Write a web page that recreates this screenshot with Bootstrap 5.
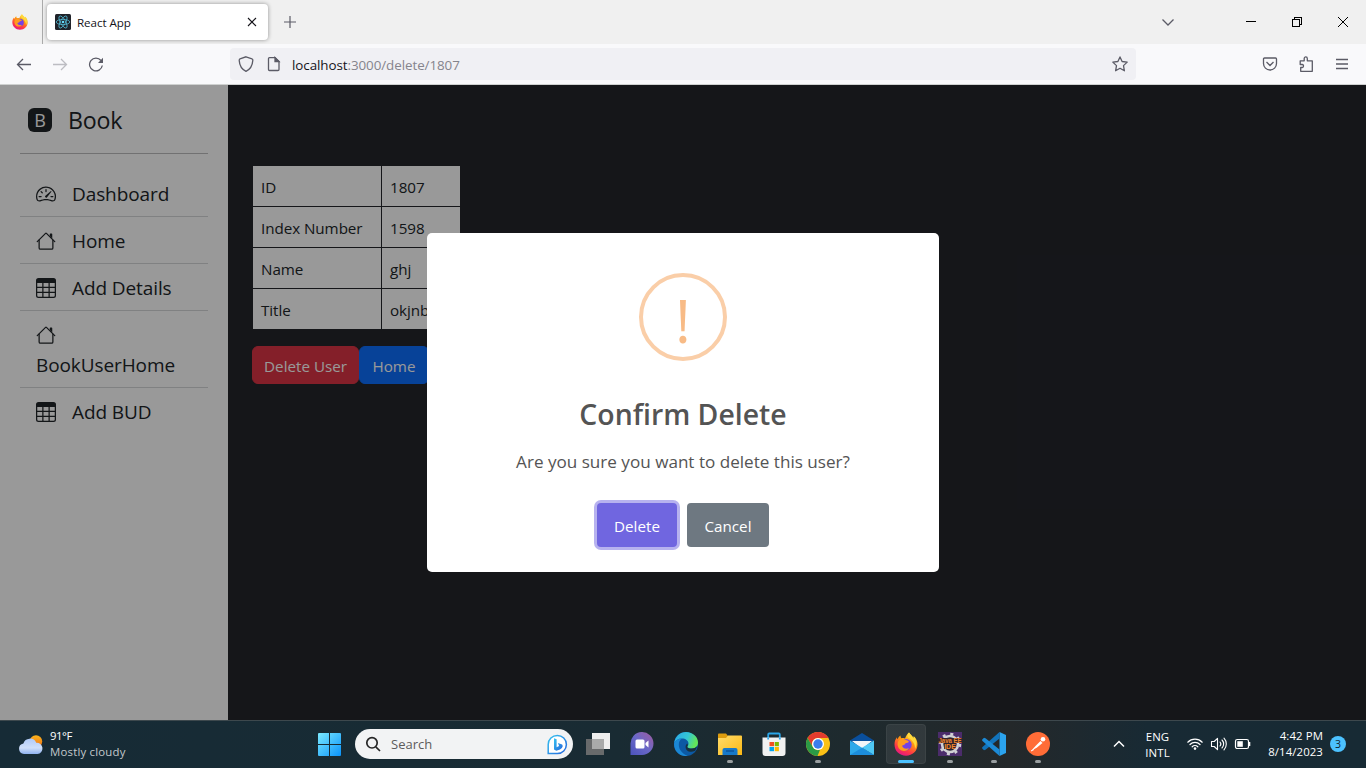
<!DOCTYPE html>
<html lang="en">
<head>
<meta charset="utf-8">
<meta name="viewport" content="width=device-width, initial-scale=1">
<title>React App</title>
<link href="https://cdn.jsdelivr.net/npm/bootstrap@5.3.0/dist/css/bootstrap.min.css" rel="stylesheet">
<style>
  html, body { height: 100%; overflow: hidden; }
  body { font-family: "Open Sans", "Noto Sans", sans-serif; font-size: 15.2px; line-height: 24px; }
  svg { display: block; flex: none; }

  /* browser chrome */
  .tabstrip { height: 44px; background: #f0f0f0; }
  .fx-view { width: 43px; border-right: 1px solid #aaa; padding-left: 12px; }
  .browser-tab { width: 221px; height: 36px; margin-left: 4px; padding: 0 10px 0 8px; background: #fff; border-radius: 4px; box-shadow: 0 0 4px rgba(0,0,0,.4); font-size: 11.6px; color: #15141a; letter-spacing: -.05px; }
  .tab-label { margin-left: 6px; padding-top: 2px; }
  .win-ctl { width: 46px; }
  .toolbar { height: 41px; background: #f9f9fb; border-bottom: 1px solid #cfd1d0; color: #5b5b66; }
  .urlbar { width: 906px; height: 32px; margin-left: 126px; padding: 0 8px; background: #f0f0f4; border-radius: 4px; font-size: 13.4px; letter-spacing: -.07px; color: #85848c; }
  .urlbar b { font-weight: 400; color: #15141a; }
  .url-text { margin-left: 10px; padding-top: 2px; }

  /* application */
  .viewport-area { background: #23252b; min-height: 0; }
  .side { width: 228px; background: #fff; padding: 14px 20px 0; color: #212529; }
  .brand-row { height: 42px; padding-left: 8px; font-size: 23.200px; line-height: 36px; gap: 16px; letter-spacing: -.2px; }
  .b-mark { width: 24px; height: 24px; border-radius: 6px; background: #212529; color: #fff; font-size: 18px; line-height: 24px; text-align: center; letter-spacing: 0; }
  .side hr { margin: 12px 0 16px; border-color: #212529; opacity: .3; }
  .side .list-group-item { padding: 8px 16px; font-size: 19px; line-height: 30px; height: 47px; color: #212529; background: none; border-color: #d5d7d9; }
  .side .list-group-item.tall { height: 77px; }
  .side .list-group-item:last-child { height: 46px; }
  .side .list-group-item svg { display: inline-block; vertical-align: -4px; width: 20px; height: 20px; margin-right: 16px; }
  .side .list-group-item span { display: inline-block; line-height: 28px; padding-top: 2px; vertical-align: top; letter-spacing: -.1px; }
  .main-pane { padding: 80px 24px 0; }
  .record { width: 209px; border-color: #23252b; margin-bottom: 16px; }
  .record td { border: 1px solid #23252b; background: #fff; color: #212529; padding: 9px 8px 7px; letter-spacing: -.05px; }
  .main-pane .btn { font-size: 15.2px; line-height: 24px; height: 38px; padding: 7px 0 5px; }

  .shade { background: rgba(0,0,0,.4); }
  .confirm { width: 512px; height: 339px; background: #fff; border-radius: 5px; padding-top: 40px; color: #545454; }
  .warn-ring { width: 88px; height: 88px; border: 4px solid #facea8; border-radius: 50%; color: #f8bb86; font-size: 60px; line-height: 86px; font-weight: 400; }
  .confirm h2 { font-size: 28.400px; line-height: 36px; font-weight: 600; margin: 35px 0 0; }
  .confirm p { font-size: 17.1px; line-height: 27px; margin: 16px 0 0; }
  .confirm .btn { height: 44px; border: 0; border-radius: 4px; color: #fff; padding: 2px 0 0; font-size: 15.2px; }
  .btn-go { width: 80px; background: #7066e0 !important; box-shadow: 0 0 0 3px rgba(112,102,224,.5); }
  .btn-no { width: 82px; background: #6e7881 !important; }

  /* taskbar */
  .taskbar { height: 48px; padding-bottom: 1px; border-top: 1px solid #3d484d; background: linear-gradient(90deg, #162b36 0, #192b33 45%, #1e2a2e 62%, #24282a 74%, #182a34 84%, #172a34 100%); color: #fff; font-size: 11.4px; line-height: 16px; }
  .weather { width: 307px; padding-left: 18px; }
  .cell { width: 44px; height: 46px; }
  .cell.run::after { content: ""; position: absolute; bottom: 4px; left: 19px; width: 6px; height: 3px; border-radius: 2px; background: #9a9fa1; }
  .cell.current::before { content: ""; position: absolute; inset: 3px 2px 3px; background: rgba(255,255,255,.08); border: 1px solid rgba(255,255,255,.05); border-radius: 4px; }
  .cell.current::after { left: 14px; width: 16px; background: #4cc2ff; }
  .cell svg { position: relative; }
  .find { width: 218px; height: 30px; border-radius: 15px; background: #f2f3f4; color: #5c5c5c; font-size: 13px; margin: 0 3px 0 4px; padding: 0 5px 0 10px; }
  .tray-badge { width: 16px; height: 16px; border-radius: 50%; background: #4cc2ff; color: #10242e; font-size: 10.5px; }
</style>
</head>
<body class="d-flex flex-column">

<svg width="0" height="0" class="position-absolute">
  <defs>
    <linearGradient id="fxA" x1=".8" y1="0" x2=".3" y2="1"><stop offset="0" stop-color="#fff44f"/><stop offset=".4" stop-color="#ff980e"/><stop offset=".75" stop-color="#ff3647"/><stop offset="1" stop-color="#e31587"/></linearGradient>
    <symbol id="firefox" viewBox="0 0 24 24">
      <path fill="url(#fxA)" d="M15 .5c1 2 3 3 4.300 5.500.5-.5.5-1 .4-1.700C22 6 23.500 9 23.500 12.500 23.500 19 18.500 23.700 12 23.700S.5 19 .5 12.500C.5 9.500 1.500 7 3 5.300c0 1 .1 1.500.5 2C4.500 5.500 5 4.500 6.500 3.500c0 1.500.4 2.300 1 2.700 1.500-.4 3 0 3.500.3C12 4 13 2 15 .5z"/>
      <circle cx="12" cy="12.800" r="5.700" fill="#7542e5"/>
      <path fill="#ff9b1f" d="M5 8c2.500-1.500 5-1.200 6.500-.2 1.300 1 3.300.7 3.300 1.700S12.500 11 11.500 11.200c-.5 1.600-2 1.700-3.500 2.500 1 3 4.500 3.600 7 2.300-1.500 3-6 4-9 1.500S3 10.500 5 8z"/>
      <path fill="#ffd83b" d="M15 .5c1 2 3 3 4.300 5.500.5-.5.5-1 .4-1.700 2.800 3 3.800 8.200 1.300 12.700.3-5-2.500-9-6.500-11-1.500-1-1-3.500.5-5.500z"/>
    </symbol>
    <symbol id="bi-house" viewBox="0 0 16 16">
      <path fill-rule="evenodd" d="M2 13.500V7h1v6.500a.5.5 0 0 0 .5.5h9a.5.5 0 0 0 .5-.5V7h1v6.500a1.500 1.500 0 0 1-1.500 1.500h-9A1.500 1.500 0 0 1 2 13.500zm11-11V6l-2-2V2.500a.5.5 0 0 1 .5-.5h1a.5.5 0 0 1 .5.5z"/>
      <path fill-rule="evenodd" d="M7.293 1.500a1 1 0 0 1 1.414 0l6.647 6.646a.5.5 0 0 1-.708.708L8 2.207 1.354 8.854a.5.5 0 1 1-.708-.708L7.293 1.500z"/>
    </symbol>
    <symbol id="bi-table" viewBox="0 0 16 16">
      <path d="M0 2a2 2 0 0 1 2-2h12a2 2 0 0 1 2 2v12a2 2 0 0 1-2 2H2a2 2 0 0 1-2-2V2zm15 2h-4v3h4V4zm0 4h-4v3h4V8zm0 4h-4v3h3a1 1 0 0 0 1-1v-2zm-5 3v-3H6v3h4zm-5 0v-3H1v2a1 1 0 0 0 1 1h3zm-4-4h4V8H1v3zm0-4h4V4H1v3zm5-3v3h4V4H6zm4 4H6v3h4V8z"/>
    </symbol>
    <symbol id="bi-speed" viewBox="0 0 16 16">
      <path d="M8 4a.5.5 0 0 1 .5.5V6a.5.5 0 0 1-1 0V4.500A.5.5 0 0 1 8 4zM3.732 5.732a.5.5 0 0 1 .707 0l.915.914a.5.5 0 1 1-.708.708l-.914-.915a.5.5 0 0 1 0-.707zM2 10a.5.5 0 0 1 .5-.5h1.586a.5.5 0 0 1 0 1H2.500A.5.5 0 0 1 2 10zm9.500 0a.5.5 0 0 1 .5-.5h1.500a.5.5 0 0 1 0 1H12a.5.5 0 0 1-.5-.5zm.754-4.246a.389.389 0 0 0-.527-.02L7.547 9.310a.91.91 0 1 0 1.302 1.258l3.434-4.297a.389.389 0 0 0-.029-.518z"/>
      <path fill-rule="evenodd" d="M0 10a8 8 0 1 1 15.547 2.661c-.442 1.253-1.845 1.602-2.932 1.250C11.309 13.488 9.475 13 8 13c-1.474 0-3.310.488-4.615.911-1.087.352-2.490.003-2.932-1.250A7.988 7.988 0 0 1 0 10zm8-7a7 7 0 0 0-6.603 9.329c.203.575.923.876 1.680.630C4.397 12.533 6.358 12 8 12s3.604.532 4.923.960c.757.245 1.477-.056 1.680-.631A7 7 0 0 0 8 3z"/>
    </symbol>
    <linearGradient id="winG" x1="0" y1="0" x2="1" y2="1"><stop offset="0" stop-color="#7beaff"/><stop offset="1" stop-color="#0a93fb"/></linearGradient>
    <linearGradient id="edgeG" x1="0" y1="0" x2="1" y2=".3"><stop offset="0" stop-color="#2aa7e8"/><stop offset=".6" stop-color="#34c6d4"/><stop offset="1" stop-color="#63e65a"/></linearGradient>
    <linearGradient id="foldG" x1="0" y1="0" x2="1" y2="1"><stop offset="0" stop-color="#ffdc6b"/><stop offset="1" stop-color="#fbb814"/></linearGradient>
    <linearGradient id="chatG" x1="1" y1="0" x2="0" y2="1"><stop offset="0" stop-color="#a15b9e"/><stop offset=".5" stop-color="#6a68c8"/><stop offset="1" stop-color="#4b53bc"/></linearGradient>
    <linearGradient id="bingG" x1="0" y1="0" x2="1" y2="1"><stop offset="0" stop-color="#35c3f0"/><stop offset="1" stop-color="#2466dc"/></linearGradient>
    <linearGradient id="sunG" x1="0" y1="0" x2="0" y2="1"><stop offset="0" stop-color="#fbb41c"/><stop offset="1" stop-color="#ef6c17"/></linearGradient>
    <linearGradient id="cloudG" x1="0" y1="0" x2="0" y2="1"><stop offset="0" stop-color="#b0caf8"/><stop offset=".6" stop-color="#cfdff9"/><stop offset="1" stop-color="#8fb2f0"/></linearGradient>
  </defs>
</svg>

<!-- tab strip -->
<div class="tabstrip d-flex align-items-center flex-shrink-0">
  <div class="fx-view h-100 d-flex align-items-center"><svg width="16" height="16"><use href="#firefox"/></svg></div>
  <div class="browser-tab d-flex align-items-center">
    <svg width="16" height="16" viewBox="0 0 16 16"><rect width="16" height="16" rx="1.500" fill="#20232a"/><g fill="none" stroke="#53b9d3" stroke-width=".8"><ellipse cx="8" cy="8" rx="6.800" ry="2.600"/><ellipse cx="8" cy="8" rx="6.800" ry="2.600" transform="rotate(60 8 8)"/><ellipse cx="8" cy="8" rx="6.800" ry="2.600" transform="rotate(120 8 8)"/></g><circle cx="8" cy="8" r="1.300" fill="#61dafb"/></svg>
    <span class="tab-label me-auto">React App</span>
    <svg width="12" height="12" viewBox="0 0 12 12" fill="none" stroke="#15141a" stroke-width="1.100"><path d="M2 2l8 8M10 2l-8 8"/></svg>
  </div>
  <svg class="ms-3" width="12" height="12" viewBox="0 0 12 12" fill="none" stroke="#5b5b66" stroke-width="1.200"><path d="M6 0v12M0 6h12"/></svg>
  <svg class="ms-auto" width="14" height="14" viewBox="0 0 14 14" fill="none" stroke="#5b5b66" stroke-width="1.300"><path d="M1.500 4.500L7 10l5.500-5.500"/></svg>
  <div class="d-flex" style="margin-left:53px">
    <div class="win-ctl d-flex justify-content-center"><svg width="10" height="10" viewBox="0 0 10 10" shape-rendering="crispEdges"><path d="M0 4h10v1H0z"/></svg></div>
    <div class="win-ctl d-flex justify-content-center"><svg width="10" height="10" viewBox="0 0 10 10" fill="none" stroke="#000" shape-rendering="crispEdges"><path d="M.5 2.500h7v7h-7zM2.500 2.500v-2h7v7h-2"/></svg></div>
    <div class="win-ctl d-flex justify-content-center"><svg width="10" height="10" viewBox="0 0 10 10" fill="none" stroke="#000"><path d="M0 0l10 10M10 0L0 10"/></svg></div>
  </div>
</div>

<!-- navigation toolbar -->
<div class="toolbar d-flex align-items-center flex-shrink-0">
  <svg style="margin-left:16px" width="16" height="16" viewBox="0 0 16 16" fill="none" stroke="currentColor" stroke-width="1.300"><path d="M15 8.500H1.500M7 3L1.500 8.500 7 14"/></svg>
  <svg style="margin-left:20px" width="16" height="16" viewBox="0 0 16 16" fill="none" stroke="#bdbdc2" stroke-width="1.300"><path d="M1 8.500h13.500M9 3l5.500 5.500L9 14"/></svg>
  <svg style="margin-left:20px" width="16" height="16" viewBox="0 0 16 16" fill="none" stroke="currentColor" stroke-width="1.300"><path d="M14.300 9.500A6.400 6.400 0 1 1 13 4.500"/><path d="M15 1.800V7h-5z" fill="currentColor" stroke="none"/></svg>
  <div class="urlbar d-flex align-items-center">
    <svg width="16" height="16" viewBox="0 0 16 16" fill="none" stroke="currentColor" stroke-width="1.300" style="color:#5b5b66"><path d="M8 .8l6 2.100c.7.200.9.700.8 1.500C14.500 9 13 13 8 15.300 3 13 1.500 9 1.200 4.400c0-.8.200-1.300.8-1.500z"/></svg>
    <svg style="margin-left:12px;color:#5b5b66" width="16" height="16" viewBox="0 0 16 16" fill="none" stroke="currentColor" stroke-width="1.300"><path d="M3.500 1.600H9l4 4v7.900a1 1 0 0 1-1 1H3.500a1 1 0 0 1-1-1V2.600a1 1 0 0 1 1-1z"/><path d="M9 1.600v4h4z" fill="currentColor"/></svg>
    <span class="url-text me-auto"><b>localhost</b>:3000/delete/1807</span>
    <svg width="16" height="16" viewBox="0 0 16 16" fill="none" stroke="#5b5b66" stroke-width="1.300" stroke-linejoin="round"><path d="M8 .9l2.100 4.600 5.100.6-3.700 3.500.9 5.200L8 12.300l-4.400 2.500.9-5.200L.8 6.100l5.100-.6z"/></svg>
  </div>
  <svg style="margin-left:126px" width="16" height="16" viewBox="0 0 16 16" fill="none" stroke="currentColor" stroke-width="1.300"><path d="M2.500 2h11a1 1 0 0 1 1 1v4.500a6.500 6.500 0 0 1-13 0V3a1 1 0 0 1 1-1zM4.500 6L8 9.500 11.500 6"/></svg>
  <svg style="margin-left:20px" width="16" height="16" viewBox="0 0 16 16" fill="none" stroke="currentColor" stroke-width="1.300" stroke-linejoin="round"><path d="M2.700 15.300V11.500h1.600c1.600 0 1.600-3 0-3H2.200V4.800h4V2.600c0-2.200 3.100-2.200 3.100 0v2.200h5v10.500z"/></svg>
  <svg style="margin-left:20px" width="16" height="16" viewBox="0 0 16 16" fill="none" stroke="currentColor" stroke-width="1.300"><path d="M2 3.500h12M2 8h12M2 12.500h12"/></svg>
</div>

<!-- page -->
<div class="viewport-area flex-grow-1 d-flex position-relative">
  <aside class="side flex-shrink-0">
    <div class="brand-row d-flex align-items-center"><span class="b-mark">B</span><span>Book</span></div>
    <hr>
    <div class="list-group list-group-flush">
      <a class="list-group-item"><svg fill="currentColor"><use href="#bi-speed"/></svg><span>Dashboard</span></a>
      <a class="list-group-item"><svg fill="currentColor"><use href="#bi-house"/></svg><span>Home</span></a>
      <a class="list-group-item"><svg fill="currentColor"><use href="#bi-table"/></svg><span>Add Details</span></a>
      <a class="list-group-item tall"><svg fill="currentColor"><use href="#bi-house"/></svg><br><span>BookUserHome</span></a>
      <a class="list-group-item"><svg fill="currentColor"><use href="#bi-table"/></svg><span>Add BUD</span></a>
    </div>
  </aside>
  <main class="main-pane flex-grow-1">
    <table class="table table-bordered record">
      <colgroup><col style="width:129px"><col></colgroup>
      <tbody>
        <tr><td>ID</td><td>1807</td></tr>
        <tr><td>Index Number</td><td>1598</td></tr>
        <tr><td>Name</td><td>ghj</td></tr>
        <tr><td>Title</td><td>okjnb</td></tr>
      </tbody>
    </table>
    <div class="d-flex"><button class="btn btn-danger" style="width:107px">Delete User</button><button class="btn btn-primary" style="width:70px">Home</button></div>
  </main>

  <div class="shade position-absolute top-0 start-0 w-100 h-100 d-flex align-items-center justify-content-center">
    <div class="confirm d-flex flex-column align-items-center" role="dialog">
      <div class="warn-ring text-center">!</div>
      <h2>Confirm Delete</h2>
      <p>Are you sure you want to delete this user?</p>
      <div class="d-flex" style="gap:10px;margin-top:28px"><button class="btn btn-go">Delete</button><button class="btn btn-no">Cancel</button></div>
    </div>
  </div>
</div>

<!-- taskbar -->
<footer class="taskbar d-flex align-items-center flex-shrink-0">
  <div class="weather d-flex align-items-center">
    <svg width="26" height="24" viewBox="0 0 26 24"><circle cx="18" cy="9.500" r="6.200" fill="url(#sunG)"/><path d="M6 22a5.300 5.300 0 0 1-.6-10.500 6.800 6.800 0 0 1 12.800-.7A5.600 5.600 0 0 1 19.500 22z" fill="url(#cloudG)"/></svg>
    <div style="margin-left:6px"><div style="letter-spacing:-.5px">91°F</div><div style="color:#c3c9cc;letter-spacing:.2px">Mostly cloudy</div></div>
  </div>
  <div class="cell d-flex align-items-center justify-content-center"><svg width="23" height="23" viewBox="0 0 23 23" fill="url(#winG)"><path d="M1 0h10v11H0V1a1 1 0 0 1 1-1zM12 0h10a1 1 0 0 1 1 1v10H12zM0 12h11v11H1a1 1 0 0 1-1-1zM12 12h11v10a1 1 0 0 1-1 1H12z"/></svg></div>
  <div class="find d-flex align-items-center">
    <svg width="16" height="16" viewBox="0 0 16 16" fill="none" stroke="#262626" stroke-width="1.700"><circle cx="7" cy="6.800" r="5.200"/><path d="M10.800 10.800L15 15"/></svg>
    <span class="me-auto" style="margin-left:10px">Search</span>
    <svg width="21" height="21" viewBox="0 0 21 21"><path d="M1.200 19.600V10.500a9.100 9.100 0 1 1 9.100 9.100z" fill="#fff" stroke="url(#bingG)" stroke-width="1.500"/><path d="M7 4.300l2.600 1v7.900l-2.600 2.300zM7 15.500l2.600-2.300 2.500-1.300-1.200-3 4.200 1.700c1.500 2-.3 4-2.100 4.800L9.300 16.800z" fill="url(#bingG)"/></svg>
  </div>
  <div class="cell d-flex align-items-center justify-content-center"><svg width="24" height="24" viewBox="0 0 24 24"><rect x="6" y="1" width="18" height="16" fill="#eee"/><rect x="0" y="7" width="18" height="16" fill="#686a6b"/><path d="M6 7h12v10H6z" fill="#a9aaaa"/></svg></div>
  <div class="cell d-flex align-items-center justify-content-center"><svg width="24" height="24" viewBox="0 0 24 24"><path d="M.5 23V12A11.500 11.500 0 1 1 12 23z" fill="url(#chatG)"/><rect x="5.500" y="7.500" width="9" height="9" rx="1.500" fill="#fff"/><path d="M15.500 11l3-2.500v7l-3-2.500z" fill="#fff"/></svg></div>
  <div class="cell d-flex align-items-center justify-content-center"><svg width="24" height="24" viewBox="0 0 24 24"><circle cx="12" cy="12" r="12" fill="#0c59a4"/><path d="M.2 11C1 4.500 6 0 12 0c7 0 12 5.200 12 10.500 0 4-3 6-6.200 6-2.600 0-4.600-.8-4.600-1.600 0-.6 1.300-1.100 1.300-3.200C14.500 8.500 11.500 6.500 8 6.500c-3.500 0-6.500 2-7.800 4.500z" fill="url(#edgeG)"/><path d="M.2 11c1.300-3 4.300-4.500 7.800-4.500-3 2-3.500 5-3 8 .8 4.500 4.500 8 9 9.300C5 25.500-.8 18 .2 11z" fill="#1b87d4"/><path d="M13.200 14.900c0 .8 2 1.600 4.600 1.600 2 0 3.900-.7 5.100-2.200-.3 1.700-.8 3-1.800 4.400-4 2.500-9.500.8-9.500-3.700 0-1.500.5-2.700 1.800-3.500.6 1.300.3 2.200-.2 3.400z" fill="#17303e"/></svg></div>
  <div class="cell run position-relative d-flex align-items-center justify-content-center"><svg width="24" height="24" viewBox="0 0 24 24"><path d="M0 2.500C0 2 .5 1.500 1 1.500h7l2 2.500v4H0z" fill="#dd9c0e"/><path d="M0 6h8l2-2.500h13a1 1 0 0 1 1 1V23H0z" fill="url(#foldG)"/><path d="M4.500 23v-5a2 2 0 0 1 2-2h11a2 2 0 0 1 2 2v5z" fill="#1679c9"/><path d="M8 19h8" stroke="#0d549b" stroke-width="1.500"/></svg></div>
  <div class="cell d-flex align-items-center justify-content-center"><svg width="24" height="24" viewBox="0 0 24 24"><path d="M6.200 7V2.500a1 1 0 0 1 1-1h9.600a1 1 0 0 1 1 1V7" fill="none" stroke="#2ba6e8" stroke-width="1.800"/><path d="M.5 5.500h23V21a3 3 0 0 1-3 3h-17a3 3 0 0 1-3-3z" fill="#f1f1f1"/><path d="M6.200 5.500V7.500M17.800 5.500V7.500" stroke="#2ba6e8" stroke-width="1.800"/><path d="M7.500 10H12v4.200H7.500z" fill="#f25022"/><path d="M12.700 10h4.200v4.200h-4.200z" fill="#7fba00"/><path d="M7.500 15H12v4.200H7.500z" fill="#00a4ef"/><path d="M12.700 15h4.200v4.200h-4.200z" fill="#ffb900"/></svg></div>
  <div class="cell run position-relative d-flex align-items-center justify-content-center"><svg width="24" height="24" viewBox="0 0 24 24"><circle cx="12" cy="12" r="12" fill="#fbc116"/><path d="M1.600 6A12 12 0 0 1 22.400 6H12a6 6 0 0 0-5.200 9z" fill="#e33b2e"/><path d="M1.600 6l5.200 9A6 6 0 0 0 14 17.700L11.500 24A12 12 0 0 1 1.600 6z" fill="#2b9a46"/><circle cx="12" cy="12" r="6" fill="#fff"/><circle cx="12" cy="12" r="4.700" fill="#3b7ded"/></svg></div>
  <div class="cell d-flex align-items-center justify-content-center"><svg width="24" height="24" viewBox="0 0 24 24"><path d="M0 8.500L12 1l12 7.500L12 17z" fill="#0a4f9c"/><path d="M2 9h20l-10 8z" fill="#f3f5f8"/><path d="M0 8.500L24 23H0z" fill="#2ea9ea"/><path d="M24 8.500V23L12 15.800z" fill="#4fc8f5"/><path d="M0 23l12-7.200L24 23z" fill="#1c8ddb"/></svg></div>
  <div class="cell run current position-relative d-flex align-items-center justify-content-center"><svg width="24" height="24"><use href="#firefox"/></svg></div>
  <div class="cell run position-relative d-flex align-items-center justify-content-center"><svg width="24" height="24" viewBox="0 0 24 24"><rect width="24" height="24" fill="#4b2c6b"/><circle cx="12" cy="12" r="8" fill="#26202e" stroke="#d0d0d4" stroke-width="2.600"/><circle cx="12" cy="12" r="10" fill="none" stroke="#d0d0d4" stroke-width="2.500" stroke-dasharray="3 4.850"/><path d="M0 6h24v5H0zM6 11.500h11V17H6z" fill="#33242b"/><g fill="#f2872d" font-family="Liberation Sans, sans-serif" font-weight="700" text-anchor="middle"><text x="12" y="11" font-size="6.500" textLength="23" lengthAdjust="spacingAndGlyphs">Java EE</text><text x="12" y="17" font-size="7">IDE</text></g></svg></div>
  <div class="cell run position-relative d-flex align-items-center justify-content-center"><svg width="24" height="24" viewBox="0 0 24 24"><path d="M17.500 0L24 3v18l-6.500 3z" fill="#2ba3ee"/><path d="M17.500 0v6.500L3.500 17.700 2 18.200.2 16.600v-1.300z" fill="#1173bb"/><path d="M17.500 24v-6.500L3.500 6.300 2 5.800.2 7.400v1.300z" fill="#1c8ad6"/></svg></div>
  <div class="cell run position-relative d-flex align-items-center justify-content-center"><svg width="24" height="24" viewBox="0 0 24 24"><circle cx="12" cy="12" r="12" fill="#ff6c37"/><path d="M5 19l4.500-5 5-5 2 2-5.500 4.500z" fill="#fff"/><circle cx="17" cy="7.200" r="2.300" fill="#fff"/><path d="M5 19l3-1.500" stroke="#fff"/></svg></div>

  <svg style="margin-left:53px" width="12" height="12" viewBox="0 0 12 12" fill="none" stroke="#fff" stroke-width="1.500"><path d="M1 8.500l5-5 5 5"/></svg>
  <div class="text-center" style="width:25px;margin-left:20px;padding-top:1px;letter-spacing:.1px"><div>ENG</div><div>INTL</div></div>
  <svg style="margin-left:17px" width="16" height="16" viewBox="0 0 16 16" fill="none" stroke="#fff" stroke-width="1.200" stroke-linecap="round"><path d="M.8 6.200a10.200 10.200 0 0 1 14.400 0M3 8.500a7 7 0 0 1 10 0M5.200 10.800a4 4 0 0 1 5.600 0"/><circle cx="8" cy="12.600" r="1.300" fill="#fff" stroke="none"/></svg>
  <svg style="margin-left:7px" width="18" height="16" viewBox="0 0 18 16" fill="none" stroke="#fff" stroke-width="1.100" stroke-linecap="round" stroke-linejoin="round"><path d="M1.500 5.500h2.700L7.500 2.300v11.400L4.200 10.500H1.500zM10 6a3 3 0 0 1 0 4M12 4a5.700 5.700 0 0 1 0 8M14 2.200a8.500 8.500 0 0 1 0 11.600"/></svg>
  <svg style="margin-left:6px" width="18" height="16" viewBox="0 0 18 16"><rect x="1.500" y="3.500" width="13" height="9" rx="1.800" fill="none" stroke="#fff" stroke-width="1.200"/><rect x="3.300" y="5.200" width="5.500" height="5.600" fill="#fff"/><path d="M15.500 6v4" stroke="#fff" stroke-width="1.600"/></svg>
  <div class="text-end ms-auto" style="margin-right:7px;letter-spacing:.1px"><div>4:42 PM</div><div>8/14/2023</div></div>
  <div class="tray-badge text-center" style="margin-right:20px">3</div>
</footer>

<script src="https://cdn.jsdelivr.net/npm/bootstrap@5.3.0/dist/js/bootstrap.bundle.min.js"></script>
</body>
</html>
